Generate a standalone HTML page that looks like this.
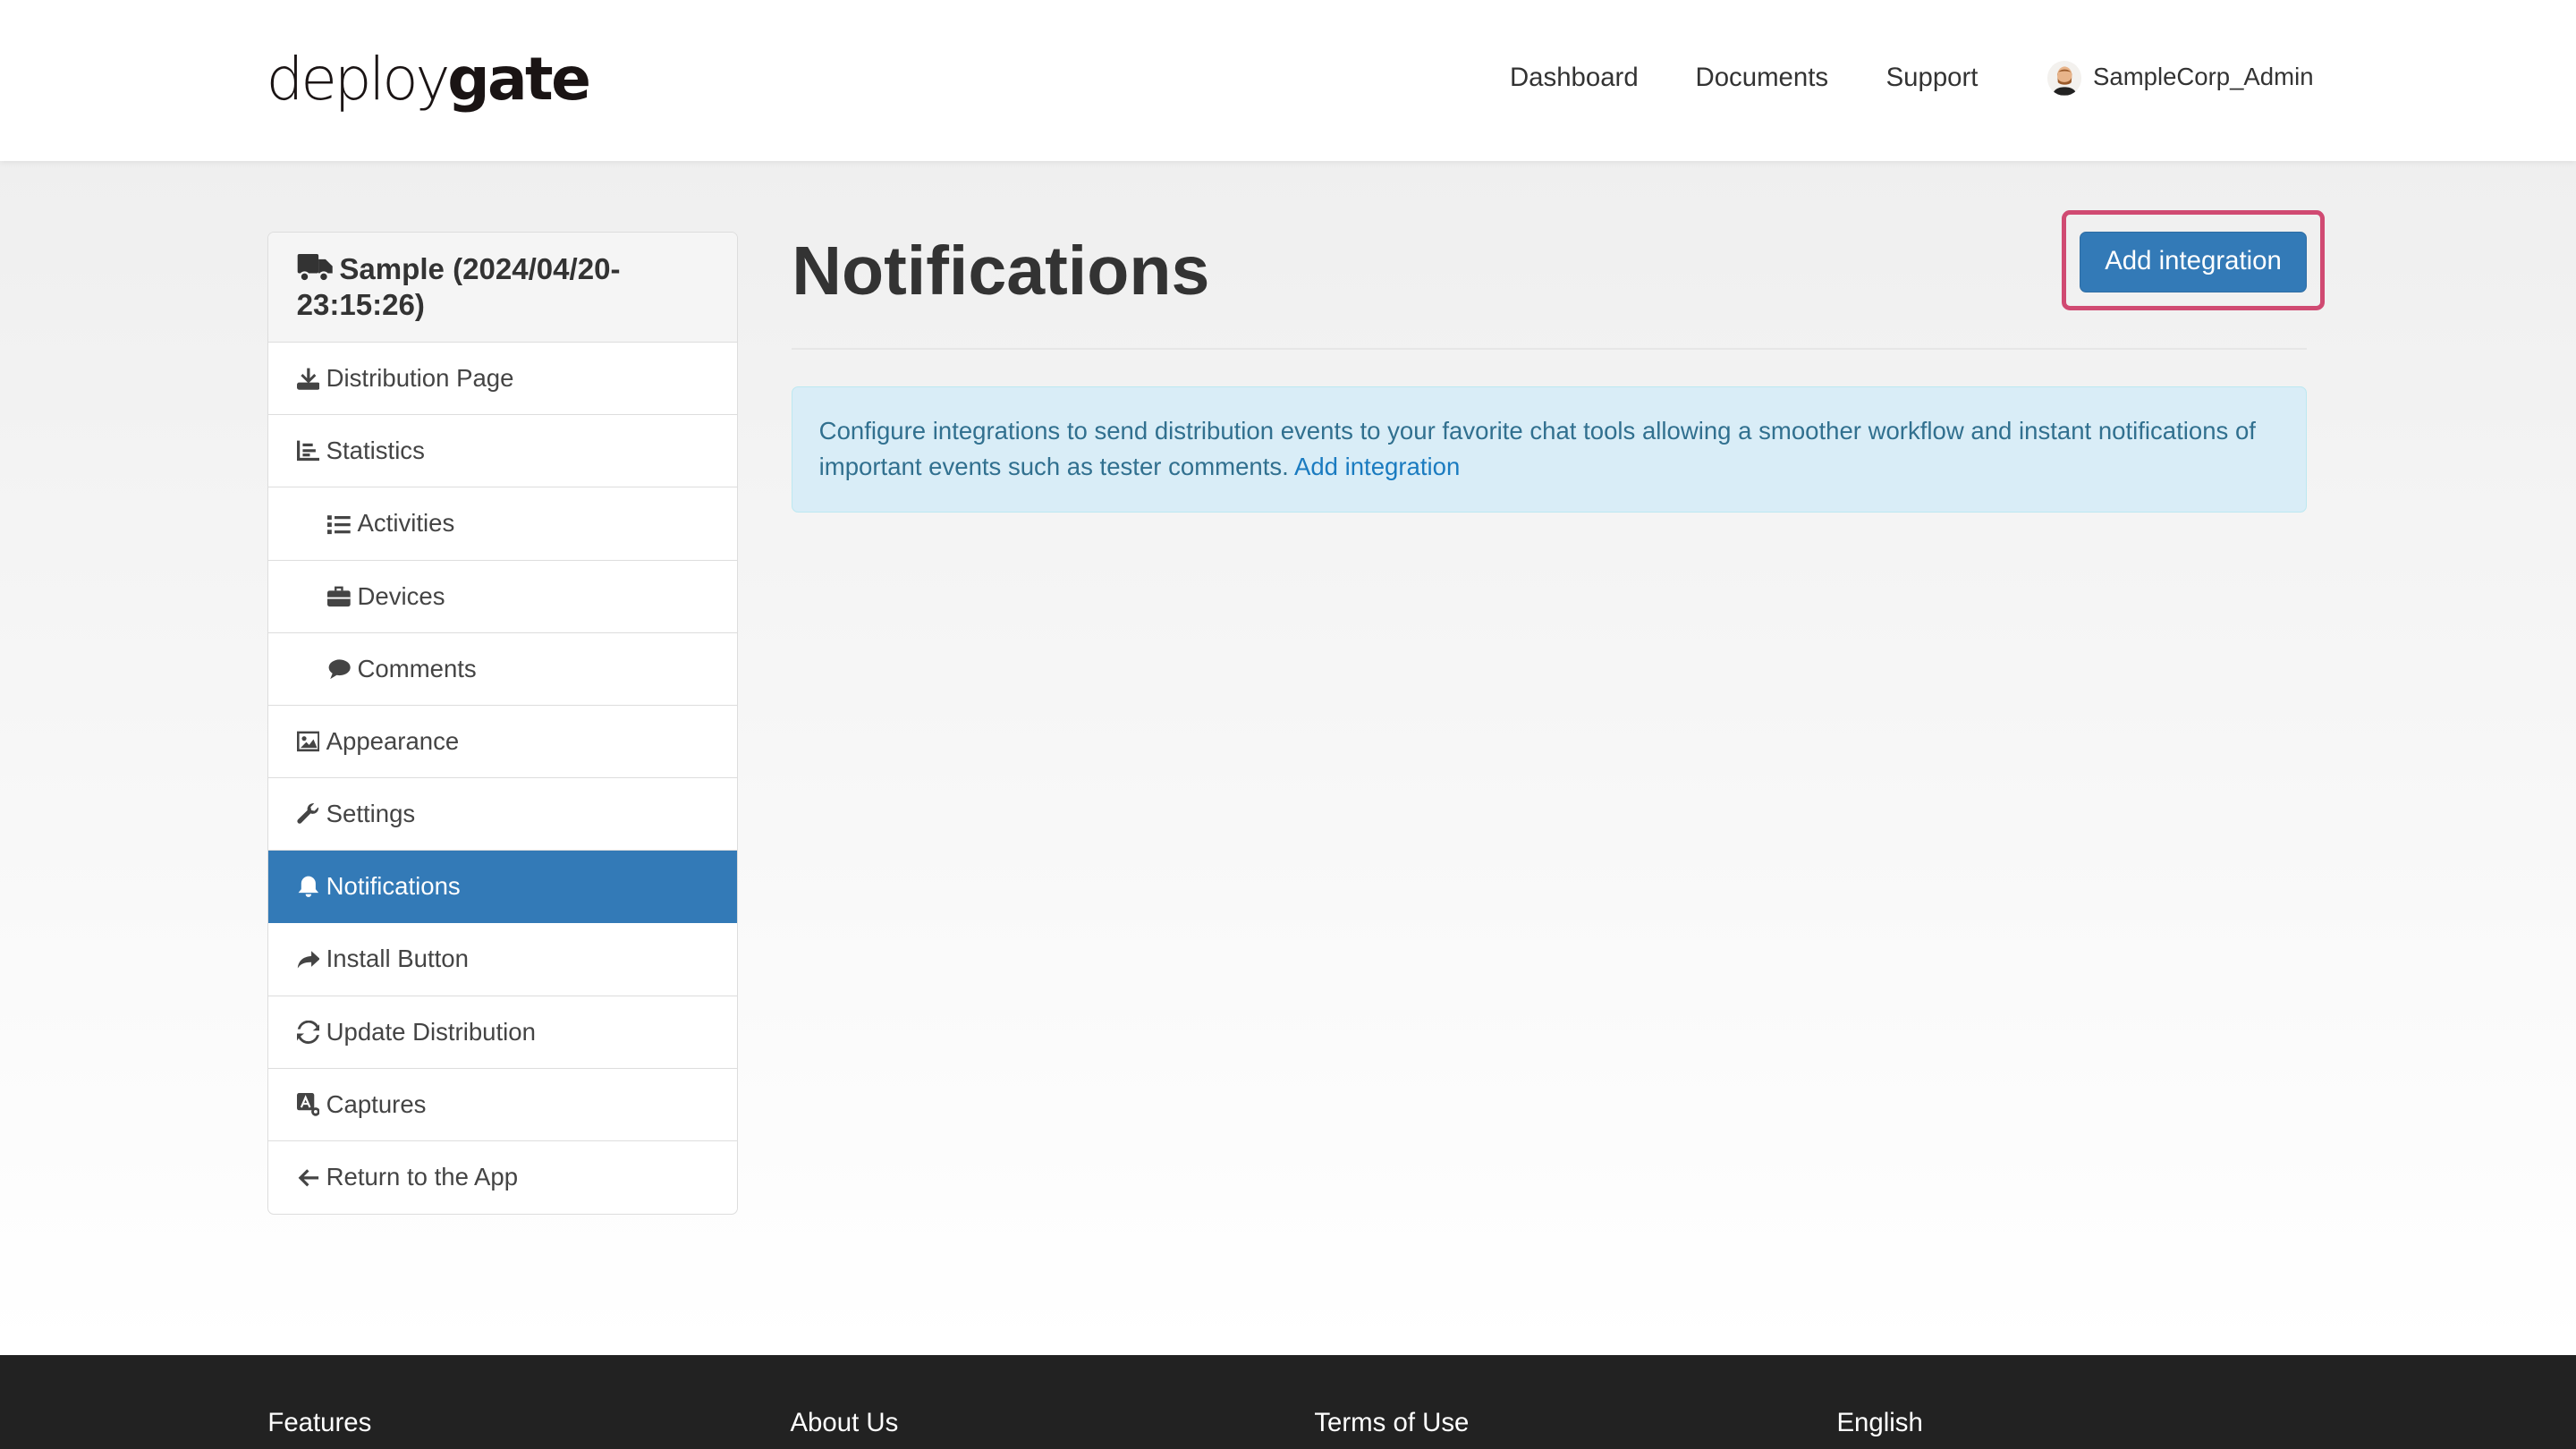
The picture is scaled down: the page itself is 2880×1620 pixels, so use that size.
<!DOCTYPE html>
<html><head><meta charset="utf-8"><style>
html,body{margin:0;padding:0;width:2880px;height:1620px;overflow:hidden;background:#fff}
#w{zoom:1.836735;width:1568px;height:882px;position:relative;font-family:"Liberation Sans","DejaVu Sans",sans-serif;color:#333;background:linear-gradient(#efefef 98px,#fff 820px)}
.hdr{position:absolute;left:0;top:0;width:1568px;height:98px;background:#fff;box-shadow:0 1px 4px rgba(0,0,0,.08)}
.logo{position:absolute;left:162px;top:27px;font-size:36px;letter-spacing:-1.8px;color:#1a1414;font-family:"DejaVu Sans","Liberation Sans",sans-serif;font-weight:300}
.logo b{font-weight:bold;letter-spacing:-1.4px}
.nav{position:absolute;top:38px;font-size:16px;color:#333}
.av{position:absolute;left:1246px;top:37px;width:21px;height:21px;border-radius:50%;background:#f3f1ee;overflow:hidden}
.side{position:absolute;left:163px;top:141px;width:285px;border:1px solid #ddd;border-radius:4px;background:#fff;overflow:hidden}
.side .h{background:#f5f5f5;height:67px;border-bottom:1px solid #ddd;padding:12px 16px 0 17px;box-sizing:border-box;font-weight:bold;font-size:18px;line-height:22px;color:#333}
.side .r{height:44.2px;box-sizing:border-box;border-bottom:1px solid #ddd;font-size:15px;padding-left:17px;color:#444;display:flex;align-items:center}
.side .r.i{padding-left:36px}
.side .r:last-child{border-bottom:0}
.side .r.a{background:#337ab7;color:#fff;border-color:#337ab7}
.side svg{width:14px;height:14px;margin-right:4px;fill:currentColor}
h1{position:absolute;left:482px;top:141px;margin:0;font-size:42px;font-weight:bold;color:#333}
.hr{position:absolute;left:482px;top:212px;width:922px;height:1px;background:#e6e6e6}
.al{position:absolute;left:482px;top:235px;width:922px;height:77px;box-sizing:border-box;background:#d9edf7;border:1px solid #bce8f1;border-radius:4px;color:#31708f;font-size:15px;line-height:22px;padding:16px 16px}
.al a{color:#1a7bc0}
.pink{position:absolute;left:1255px;top:128px;width:160px;height:61px;box-sizing:border-box;border:3px solid #d04a72;border-radius:5px}
.btn{position:absolute;left:1266px;top:141px;width:138px;height:37px;background:#337ab7;border:1px solid #2e6da4;box-sizing:border-box;border-radius:4px;color:#fff;font-size:16px;line-height:35px;text-align:center}
.ft{position:absolute;left:0;top:825px;width:1568px;height:57px;background:#222}
.ft span{position:absolute;top:32px;color:#fff;font-size:16px}
</style></head><body><div id="w">
<div class="hdr">
<div class="logo">deploy<b>gate</b></div>
<div class="nav" style="left:919px">Dashboard</div>
<div class="nav" style="left:1032px">Documents</div>
<div class="nav" style="left:1148px">Support</div>
<div class="av"><svg viewBox="0 0 21 21" width="21" height="21"><path d="M3 21c1-4 4-5 7.5-5s6.5 1 7.5 5z" fill="#222"/><ellipse cx="10.5" cy="9" rx="4.5" ry="5.5" fill="#e8b48a"/><path d="M6 9c0-5 9-5 9 0l-.5-2c-2-1-6-1-8 0z" fill="#9a5a2a"/><path d="M6.2 10c.5 4 7.6 4 8.6 0l-.2 3c-1 2-7 2-8.2 0z" fill="#9a5a2a"/></svg></div>
<div class="nav" style="left:1274px;top:38px;font-size:15px">SampleCorp_Admin</div>
</div>

<div class="side">
<div class="h"><svg viewBox="0 0 20 16" style="width:22px;height:17px;vertical-align:-2px;margin-right:4px;fill:#333"><rect x="0" y="0" width="12" height="11" rx="1"/><path d="M12 3h4l4 4v4h-8z"/><circle cx="4" cy="13" r="2.5" stroke="#f5f5f5" stroke-width="1.2"/><circle cx="15" cy="13" r="2.5" stroke="#f5f5f5" stroke-width="1.2"/></svg>Sample (2024/04/20-<br>23:15:26)</div>
<div class="r"><svg viewBox="0 0 16 16"><path d="M7 1h2v7l3-3 1.3 1.3L8 11.5 2.7 6.3 4 5l3 3z"/><rect x="0" y="11" width="16" height="5" rx="1.5"/></svg>Distribution Page</div>
<div class="r"><svg viewBox="0 0 16 16"><path d="M0 1h2v12h14v2H0z"/><rect x="4" y="3" width="7" height="2"/><rect x="4" y="7" width="9" height="2"/><rect x="4" y="10" width="5" height="2"/></svg>Statistics</div>
<div class="r i"><svg viewBox="0 0 16 16"><rect x="0" y="2" width="3" height="3"/><rect x="0" y="7" width="3" height="3"/><rect x="0" y="12" width="3" height="3"/><rect x="5" y="2.5" width="11" height="2"/><rect x="5" y="7.5" width="11" height="2"/><rect x="5" y="12.5" width="11" height="2"/></svg>Activities</div>
<div class="r i"><svg viewBox="0 0 16 16"><path d="M5 1h6v3h-1.5V2.5h-3V4H5z"/><rect x="0" y="4" width="16" height="11" rx="1.5"/><rect x="0" y="8.5" width="16" height="1.2" fill="#fff"/></svg>Devices</div>
<div class="r i"><svg viewBox="0 0 16 16"><ellipse cx="8.5" cy="7" rx="7.5" ry="5.5"/><path d="M2 15l2-5 3 2z"/></svg>Comments</div>
<div class="r"><svg viewBox="0 0 16 16"><path d="M0 1h16v14H0zM1.6 2.6v10.8h12.8V2.6z"/><circle cx="5" cy="6" r="1.6"/><path d="M2.5 12.5l4-4 2 2 3-4 2.5 6z"/></svg>Appearance</div>
<div class="r"><svg viewBox="0 0 16 16"><path d="M15 4a4 4 0 0 1-5.5 3.7L3 14.3a1.6 1.6 0 0 1-2.3-2.3l6.6-6.5A4 4 0 0 1 12 0.8L9.5 3.3l.5 2.2 2.2.5L14.7 3.5c.2.2.3.3.3.5z"/></svg>Settings</div>
<div class="r a"><svg viewBox="0 0 16 16"><path d="M8 1a5 5 0 0 1 5 5v4l2 2.5H1L3 10V6a5 5 0 0 1 5-5zM6 13.5h4a2 2 0 0 1-4 0z"/></svg>Notifications</div>
<div class="r"><svg viewBox="0 0 16 16"><path d="M10 2l6 5.5-6 5.5V9.8C5 9.8 2.5 11 0.5 14 1 9 4 6 10 5.5z"/></svg>Install Button</div>
<div class="r"><svg viewBox="0 0 16 16"><path d="M13.5 5A6 6 0 0 0 2.3 6H0.5a7.8 7.8 0 0 1 14.3-2.4L16 2v5h-5zM2.5 11A6 6 0 0 0 13.7 10h1.8a7.8 7.8 0 0 1-14.3 2.4L0 14V9h5z"/></svg>Update Distribution</div>
<div class="r"><svg viewBox="0 0 16 16"><rect x="0" y="0" width="12" height="12" rx="1.5"/><path d="M3 10l3-7 3 7M4.3 7.5h3.4" stroke="#fff" stroke-width="1.3" fill="none"/><circle cx="13" cy="13" r="3"/><circle cx="13" cy="13" r="1.2" fill="#fff"/></svg>Captures</div>
<div class="r"><svg viewBox="0 0 16 16"><path d="M1 8l6-6 1.4 1.4L4.8 7H15v2H4.8l3.6 3.6L7 14z"/></svg>Return to the App</div>
</div>

<h1>Notifications</h1>
<div class="hr"></div>
<div class="pink"></div>
<div class="btn">Add integration</div>
<div class="al">Configure integrations to send distribution events to your favorite chat tools allowing a smoother workflow and instant notifications of important events such as tester comments. <a>Add integration</a></div>

<div class="ft">
<span style="left:163px">Features</span>
<span style="left:481px">About Us</span>
<span style="left:800px">Terms of Use</span>
<span style="left:1118px">English</span>
</div>
</div></body></html>
